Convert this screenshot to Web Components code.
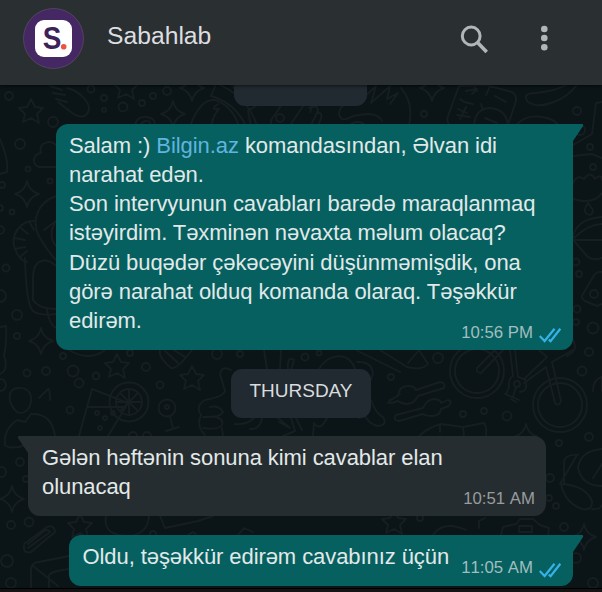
<!DOCTYPE html>
<html lang="az">
<head>
<meta charset="utf-8">
<title>Sabahlab</title>
<style>
html,body{margin:0;height:100%;overflow:hidden;background:#0b1417}
body{font-family:"Liberation Sans",Arial,sans-serif}
</style>
</head>
<body>
<chat-screen>
  <chat-header slot="header" name="Sabahlab"></chat-header>
  <date-chip class="cut"></date-chip>
  <chat-bubble kind="out" class="first" time="10:56 PM">Salam :) <a>Bilgin.az</a> komandasından, Əlvan idi<br>narahat edən.<br>Son intervyunun cavabları barədə maraqlanmaq<br>istəyirdim. Təxminən nəvaxta məlum olacaq?<br>Düzü buqədər çəkəcəyini düşünməmişdik, ona<br>görə narahat olduq komanda olaraq. Təşəkkür<br>edirəm.</chat-bubble>
  <date-chip class="day">THURSDAY</date-chip>
  <chat-bubble kind="in" class="reply" time="10:51 AM">Gələn həftənin sonuna kimi cavablar elan<br>olunacaq</chat-bubble>
  <chat-bubble kind="out" class="last" time="11:05 AM">Oldu, təşəkkür edirəm cavabınız üçün</chat-bubble>
</chat-screen>

<script>
const define = (name, html, init) => customElements.define(name, class extends HTMLElement {
  constructor() {
    super();
    this.attachShadow({mode: 'open'}).innerHTML = html;
  }
  connectedCallback() { if (init) init(this, this.shadowRoot); }
});

define('doodle-wallpaper', `
<style>:host{display:block;width:602px;height:592px}svg{display:block}</style>
<svg width="602" height="592" viewBox="0 0 602 592" fill="none" stroke="#171e21" stroke-width="1.9" stroke-linecap="round" stroke-linejoin="round">
  <defs>
    <path id="star" d="M0-12 4-4 12-3 6 3 8 12 0 7-8 11-6 3-12-3-4-4Z"/>
    <path id="spark" d="M0-13Q2-3 12 0Q2 3 0 13Q-2 3-12 0Q-2-3 0-13Z"/>
  </defs>
  <g id="dots"></g>
  <use href="#star" x="31" y="111"/><use href="#star" x="126" y="87"/><use href="#star" x="117" y="366"/>
  <use href="#star" x="192" y="378"/><use href="#star" x="80" y="526"/>
  <use href="#spark" x="27" y="194"/><use href="#spark" x="192" y="88"/><use href="#spark" x="173" y="114"/>
  <use href="#spark" x="41" y="341"/><use href="#spark" x="12" y="499"/><use href="#spark" x="526" y="437"/>
  <use href="#spark" x="584" y="537"/><use href="#spark" x="432" y="88"/><use href="#star" x="394" y="522"/>
  <!-- glove and cloud -->
  <path d="M50 86 62 90M53 93 65 95M56 99 67 102M67 88C80 91 94 105 87 114C80 122 69 110 58 102"/>
  <path d="M56 167H39C31 164 33 154 41 153C38 143 50 139 56 145M0 139Q9 160 7 172L0 174"/>
  <!-- astronaut -->
  <path d="M56 196C36 203 31 223 40 238Q46 249 56 260M56 221Q47 235 56 246M34 221C19 221 10 236 15 249Q19 260 27 262M30 223 34 230M21 228 28 234M15 238 25 240M15 249 25 247M20 257 27 251M25 258Q26 304 33 311Q39 316 56 314M33 276C34 257 48 258 56 266M33 276V300Q39 309 56 309M47 310Q49 324 56 328M56 221 44 230"/>
  <path d="M0 327 6 326Q7 343 4 355Q9 370 0 374M69 350Q89 362 105 350"/>
  <!-- top strip -->
  <path d="M135 126Q136 116 147 117Q157 119 154 126M140 126Q143 119 150 122V126M190 126Q202 95 218 101Q233 108 239 126M211 126Q214 114 219 109Q209 110 218 104M216 84 211 96Q235 103 246 126M218 84Q248 97 257 126M231 84 237 92M251 126 248 111 262 102 281 106 271 120V126M291 124 303 106Q308 102 312 107L310 112M309 108Q318 104 318 111L311 125M318 113Q325 112 318 125M339 113Q342 99 359 102L376 86L371 103 390 86 387 99 398 93 390 104M401 88Q414 103 409 125M339 114C342 126 352 114 359 115C374 112 380 117 382 121M348 126Q358 118 367 126"/>
  <!-- ticket and planets -->
  <path d="M459 86 448 116Q446 123 451 126M459 86 486 85 512 92Q518 96 515 104L509 122M474 126Q475 109 489 108Q507 109 508 126M495 96 506 102M485 118 497 123M490 86Q488 91 486 95M460 99 463 101M464 102 473 104M481 104 483 110M474 86 477 91M466 91 477 89 472 94M458 109 467 113M466 107 460 119M457 115 470 117M528 102Q521 93 536 93Q556 91 568 84M528 102C542 111 566 99 576 86M515 126Q526 114 542 117Q553 118 559 126"/>
  <!-- right edge -->
  <path d="M596 103 592 134 573 145M596 103 602 102M573 156 592 154 602 158M573 183Q577 174 584 179Q590 170 595 179Q601 173 602 180M573 199Q594 205 602 193M588 203Q582 211 587 214Q592 217 593 210ZM573 237Q576 219 602 217M573 239Q588 224 602 224M574 241 588 257Q593 261 602 258M573 240H602M602 272Q596 271 593 277L583 294Q580 298 585 301L597 306 602 304M573 340Q579 350 567 356"/>
  <!-- drink, person, slice -->
  <circle cx="129" cy="402" r="19.5"/><circle cx="129" cy="402" r="13"/>
  <path d="M129 389V415M116 402H142M120 393 138 411M120 411 138 393M92 389 79 436M92 389 128 403 108 436M87 407H123"/>
  <circle cx="97" cy="413" r="2"/><circle cx="105" cy="418" r="2"/><circle cx="113" cy="413" r="2"/><circle cx="100" cy="428" r="2"/>
  <circle cx="167" cy="408" r="8.5"/><circle cx="167" cy="407" r="2"/>
  <path d="M170 417 173 428M166 431 179 427M17 412C7 403 7 389 18 388C30 387 34 397 29 408Q23 415 17 412ZM17 420Q3 430 5 445Q9 450 27 445M17 420 25 422 31 414Q52 413 55 436M39 398 48 389Q50 388 50 400 60 400Q64 404 54 406 54 414Q48 420 45 409 37 405Q35 400 39 398Z"/>
  <path d="M160 350Q158 357 171 368Q177 370 192 350M165 351 178 363M174 350 185 357"/>
  <!-- thumb, balloons -->
  <path d="M231 370Q222 365 220 374L225 391Q223 397 205 400Q195 406 201 415Q196 426 205 435M210 407Q219 405 223 412Q220 418 203 417M203 417Q225 415 222 425Q220 430 203 428M222 428 223 436M264 350 267 369M281 350 280 369M288 369Q287 355 294 360L291 370M319 369C327 354 349 350 355 369M357 362Q372 361 373 374L370 382M371 400Q376 414 383 417Q388 425 378 426Q369 424 365 416L359 418M327 418Q320 432 314 423L313 436M235 424Q247 425 254 418M262 418Q260 430 250 429M279 422 290 428 278 418M291 418 295 431 283 436M302 430 296 418M356 350 400 372M388 403Q392 399 400 394"/>
  <!-- paint tube, sliders -->
  <path d="M380 350 407 367Q422 371 428 364L419 350 408 363"/>
  <path d="M390 400 398 396Q399 386 408 386Q414 386 416 390L440 382Q446 383 444 388L418 396Q414 404 407 404Q400 403 398 401L392 403Q387 403 390 400ZM396 415 423 408Q427 399 435 399Q441 400 441 403L448 400Q453 401 449 406L441 409Q440 416 432 416Q426 416 423 414L399 421Q392 420 396 415Z"/>
  <!-- bicycle -->
  <circle cx="477" cy="371" r="27"/><circle cx="477" cy="371" r="22"/><circle cx="560" cy="405" r="27"/><circle cx="560" cy="405" r="22"/>
  <path d="M495 350 477 368Q476 373 481 373L503 350M510 350 513 376M515 350 518 377 524 379 547 357 539 350M524 383 546 367 555 403Q559 407 561 401L552 362 573 350M513 376Q508 379 509 387M525 379Q529 391 520 392M516 387 513 397M509 387 506 394M505 394 519 400M511 399 516 402"/>
  <circle cx="517" cy="384" r="3"/>
  <path d="M419 436Q429 427 441 424L463 427 484 423Q487 426 486 436M440 424V432M463 427 464 436"/>
  <!-- flower and leaves -->
  <path d="M593 391Q593 379 602 377M602 377V391ZM564 484V461Q566 454 578 455M602 449Q580 451 578 468Q582 486 602 486M561 484Q585 485 592 501Q593 511 582 509Q565 503 561 484ZM593 478 602 464M592 509Q600 510 602 505M560 484 577 455"/>
  <!-- lower objects -->
  <path d="M24 544 47 527Q54 524 55 532L31 552Q23 554 24 546M28 548 50 532Q48 528 43 532L28 544"/>
  <path d="M31 588V568Q33 562 39 562L69 556M49 588V575Q52 571 69 569M33 566 58 586M106 516C103 530 113 536 129 536Q148 534 149 516M160 516 165 528 198 521 213 516M188 535 193 532 196 534M238 535 244 528 253 532M433 535Q443 520 466 530M501 535 503 527 516 524 520 519 533 519 540 525 549 528 548 535M519 526H532V532H519ZM479 521V528M479 521 485 518"/>
</svg>`, (el, root) => {
  const dots = [[9,96,4],[91,89,3.5],[104,98,3],[104,110,2],[123,107,4.5],[142,103,3],[153,96,3],[167,91,4],[53,122,5],[20,144,5],[28,169,2.5],[50,181,2.5],[2,185,3],[0,208,3],[12,212,2.5],[0,230,4],[6,268,3.5],[0,296,6],[17,315,5],[17,336,3],[63,356,3],[27,373,3.5],[46,371,4],[73,371,5.5],[96,376,3.5],[79,383,4.5],[130,353,3],[146,367,4],[160,385,3.5],[70,410,3.5],[0,385,6],[133,436,4],[147,436,4],[217,354,5],[240,354,3],[305,357,3.5],[319,353,2.5],[391,377,3],[438,358,5],[463,414,3],[484,411,3],[507,416,4.5],[577,309,3.5],[576,322,3],[593,328,5.5],[589,352,4],[582,371,4.5],[577,111,4],[424,114,3],[280,118,4],[580,130,5],[590,147,3],[593,167,3],[576,262,3.5],[579,274,3],[594,294,4],[559,443,3],[589,437,4],[550,478,4],[556,506,3],[549,498,3],[20,462,4],[1,472,5],[26,479,3],[11,525,4],[29,522,4.5],[7,561,6],[11,583,5],[153,534,3],[564,527,4],[576,558,5],[593,583,5],[420,518,3]];
  root.getElementById('dots').innerHTML = dots.map(([x,y,r]) => `<circle cx="${x}" cy="${y}" r="${r}"/>`).join('');
});

define('user-avatar', `
<style>:host{display:block;width:61px;height:61px}svg{display:block}text{font:bold 31px "Liberation Sans",sans-serif}</style>
<svg width="61" height="61" viewBox="0 0 61 61">
  <circle cx="30.5" cy="30.5" r="30" fill="#442763" stroke="#65566f" stroke-width=".6"/>
  <rect x="12" y="12" width="37" height="37" rx="9" fill="#fff"/>
  <text x="19.8" y="41" textLength="18.6" lengthAdjust="spacingAndGlyphs" fill="#3b235a">S</text>
  <circle cx="40.7" cy="38.7" r="2.8" fill="#f0503e"/>
</svg>`);

define('chat-header', `
<style>
:host{display:flex;align-items:flex-start;box-sizing:border-box;height:85px;padding:8px 0 0 23px;background:#2a2f32;box-shadow:0 1px 3px rgba(0,0,0,.55)}
h1{flex:1;margin:14px 0 0 23px;font-size:24.7px;line-height:28px;font-weight:400;color:#dcdee0}
.search{margin:16px 0 0;width:30px;height:30px}
.more{margin:16px 54px 0 50px;width:8px;height:28px}
svg{display:block}
</style>
<user-avatar></user-avatar>
<h1></h1>
<svg class="search" viewBox="0 0 30 30" fill="none" stroke="#b3b6b7"><circle cx="11.2" cy="12" r="8.9" stroke-width="3"/><path d="M17.5 18.5 26.7 28" stroke-width="3.6"/></svg>
<svg class="more" viewBox="0 0 8 28" fill="#b3b6b7"><circle cx="4.3" cy="5" r="3.3"/><circle cx="4.3" cy="14" r="3.3"/><circle cx="4.3" cy="23.2" r="3.3"/></svg>`,
(el, root) => { root.querySelector('h1').textContent = el.getAttribute('name'); });

define('date-chip', `
<style>
:host{display:block;box-sizing:border-box;border-radius:11px;background:#202a30;color:#d9dcde;font-size:19px;line-height:22px;text-align:center;padding-top:11px}
</style><slot></slot>`);

define('chat-bubble', `
<style>
:host{display:grid;position:relative;box-sizing:border-box;border-radius:12px;padding:6.8px 12px 0 13px;color:#e2e9e9;font-size:22px;line-height:29.2px}
:host([kind=out]){background:#066060;border-top-right-radius:0}
:host([kind=in]){background:#262d30;border-top-left-radius:0;padding:6.8px 11px 0 14px}
:host(.last){padding-left:13.5px}
.text,.meta{grid-area:1/1}
.text{white-space:nowrap;letter-spacing:-.075px}
::slotted(a){color:#60b4df}
.meta{align-self:end;justify-self:end;display:flex;align-items:flex-end;gap:6px;font-size:16.8px;line-height:20px;font-kerning:none;color:#a0bebe;padding-bottom:6.5px}
:host([kind=in]) .meta{color:#989c9e;padding-bottom:7px}
:host(.last) .meta{padding-bottom:8px}
.ticks{display:block;margin-bottom:.5px}
:host([kind=in]) .ticks{display:none}
.tail{position:absolute;top:0;right:-11px;display:block;fill:#066060}
:host([kind=in]) .tail{right:auto;left:-11px;transform:scaleX(-1);fill:#262d30}
</style>
<svg class="tail" width="12" height="17" viewBox="0 0 12 17"><path d="M0 0H10Q12 .4 10.7 2.5L1 17H0Z"/></svg>
<div class="text"><slot></slot></div>
<div class="meta"><span class="time"></span><svg class="ticks" width="22" height="16" viewBox="0 0 22 16" fill="none" stroke="#36b2e8" stroke-width="2.2"><path d="M.7 9 5.6 14 15.5 1.8M9.8 12.6 11.6 14.2 21.3 1.8"/></svg></div>`,
(el, root) => { root.querySelector('.time').textContent = el.getAttribute('time'); });

define('chat-screen', `
<style>
:host{display:grid;width:602px;height:592px;overflow:hidden;background:#0b1417}
doodle-wallpaper,main{grid-area:1/1}
main{position:relative;display:flex;flex-direction:column;height:592px}
::slotted(chat-header){position:relative;z-index:1;flex:none}
.list{display:flex;flex-direction:column;flex:1;min-height:0}
::slotted(*){flex:none}
::slotted(.cut){width:133px;height:32px;margin:-11px 0 18px 234px}
::slotted(.first){width:517px;height:225.5px;margin-left:56px}
::slotted(.day){width:140px;height:49px;margin:19.5px 0 18px 231px}
::slotted(.reply){width:518px;height:80px;margin-left:28px}
::slotted(.last){width:504px;height:51px;margin:19px 0 0 69px}
footer{height:3px;background:#151313;border-top:1px solid #000}
</style>
<doodle-wallpaper></doodle-wallpaper>
<main><slot name="header"></slot><div class="list"><slot></slot></div><footer></footer></main>`);
</script>
</body>
</html>
